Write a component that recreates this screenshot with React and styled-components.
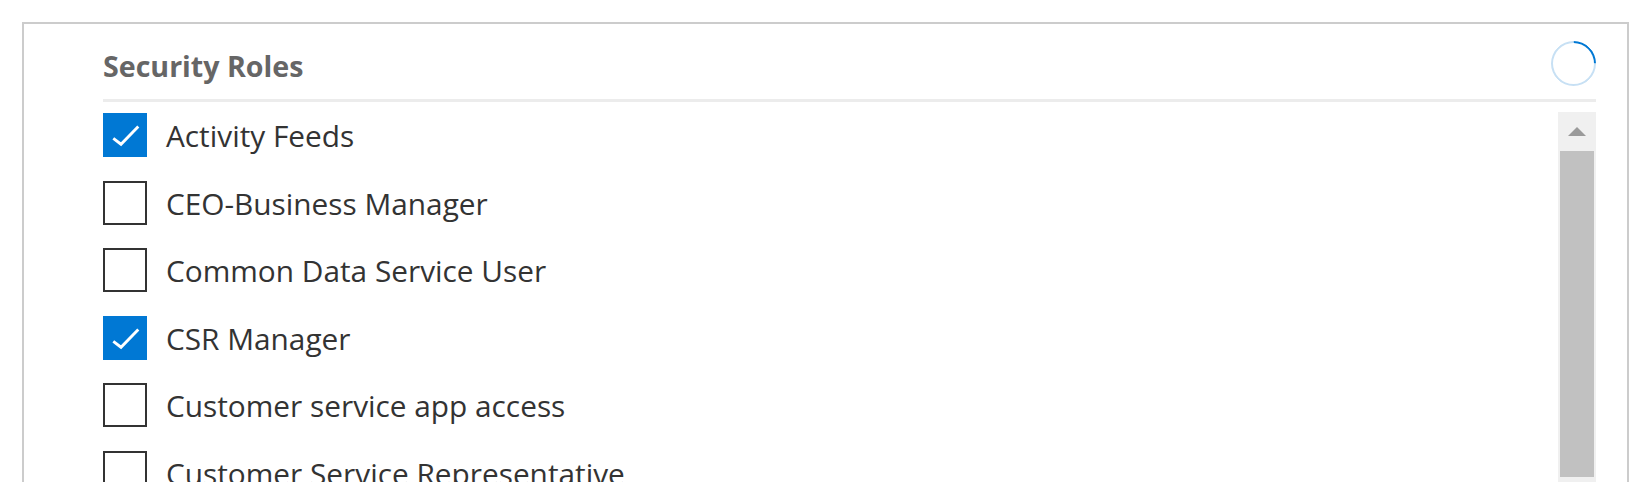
import React from 'react';
import styled, { createGlobalStyle } from 'styled-components';

const Global = createGlobalStyle`
  html, body { margin: 0; padding: 0; background: #ffffff; }
  body { font-family: "Open Sans", "Noto Sans", sans-serif; overflow: hidden; }
  * { box-sizing: border-box; }
`;

const Page = styled.div`
  padding: 22px 21px 0 22px;
`;

const Panel = styled.section`
  border: 2px solid #cccccc;
  padding: 17px 31px 0 79px;
  height: 640px;
`;

const Header = styled.div`
  display: flex;
  align-items: center;
  justify-content: space-between;
  height: 45px;
`;

const Title = styled.h2`
  margin: 0;
  padding-top: 5px;
  font-size: 28.6px;
  line-height: 1;
  font-weight: 700;
  color: #666666;
`;

const Spinner = styled.div`
  width: 45px;
  height: 45px;
  border-radius: 50%;
  border: 2.5px solid #c7e0f4;
  border-top-color: #0078d4;
  transform: rotate(45deg);
`;

const Divider = styled.div`
  height: 3px;
  margin-top: 13px;
  background: #ececec;
`;

const Body = styled.div`
  display: flex;
  margin-top: 10px;
`;

const List = styled.ul`
  flex: 1;
  list-style: none;
  margin: 0;
  padding: 1px 0 0 0;
  display: flex;
  flex-direction: column;
  gap: 23.5px;
`;

const Row = styled.li`
  display: flex;
  align-items: center;
  height: 44px;
`;

const Box = styled.span`
  flex: none;
  width: 44px;
  height: 44px;
  display: flex;
  align-items: center;
  justify-content: center;
  background: ${(p) => (p.$checked ? '#0078d4' : '#ffffff')};
  border: 2px solid ${(p) => (p.$checked ? '#0078d4' : '#333333')};
`;

const Label = styled.span`
  margin-left: 19px;
  padding-top: 1px;
  font-size: 29.8px;
  color: #333333;
  white-space: nowrap;
`;

const Scrollbar = styled.div`
  flex: none;
  width: 38px;
  height: 520px;
  background: #f0f0f0;
  display: flex;
  flex-direction: column;
  padding: 0 2px;
`;

const ArrowButton = styled.div`
  height: 39px;
  display: flex;
  align-items: center;
  justify-content: center;
`;

const Thumb = styled.div`
  height: 326px;
  background: #c1c1c1;
`;

const CheckIcon = () => (
  <svg width="44" height="44" viewBox="0 0 44 44" style={{ display: 'block', margin: -2 }}>
    <polyline points="10.3,25.3 18,31.2 35.3,13.5" fill="none" stroke="#ffffff" strokeWidth="2.9" />
  </svg>
);

const roles = [
  { name: 'Activity Feeds', checked: true },
  { name: 'CEO-Business Manager', checked: false },
  { name: 'Common Data Service User', checked: false },
  { name: 'CSR Manager', checked: true },
  { name: 'Customer service app access', checked: false },
  { name: 'Customer Service Representative', checked: false },
  { name: 'Delegate', checked: false },
];

export default function App() {
  return (
    <>
      <Global />
      <Page>
        <Panel>
          <Header>
            <Title>Security Roles</Title>
            <Spinner />
          </Header>
          <Divider />
          <Body>
            <List>
              {roles.map((r) => (
                <Row key={r.name}>
                  <Box $checked={r.checked}>{r.checked && <CheckIcon />}</Box>
                  <Label>{r.name}</Label>
                </Row>
              ))}
            </List>
            <Scrollbar>
              <ArrowButton>
                <svg width="18" height="9" viewBox="0 0 18 9">
                  <polygon points="9,0 18,9 0,9" fill="#9a9a9a" />
                </svg>
              </ArrowButton>
              <Thumb />
            </Scrollbar>
          </Body>
        </Panel>
      </Page>
    </>
  );
}
